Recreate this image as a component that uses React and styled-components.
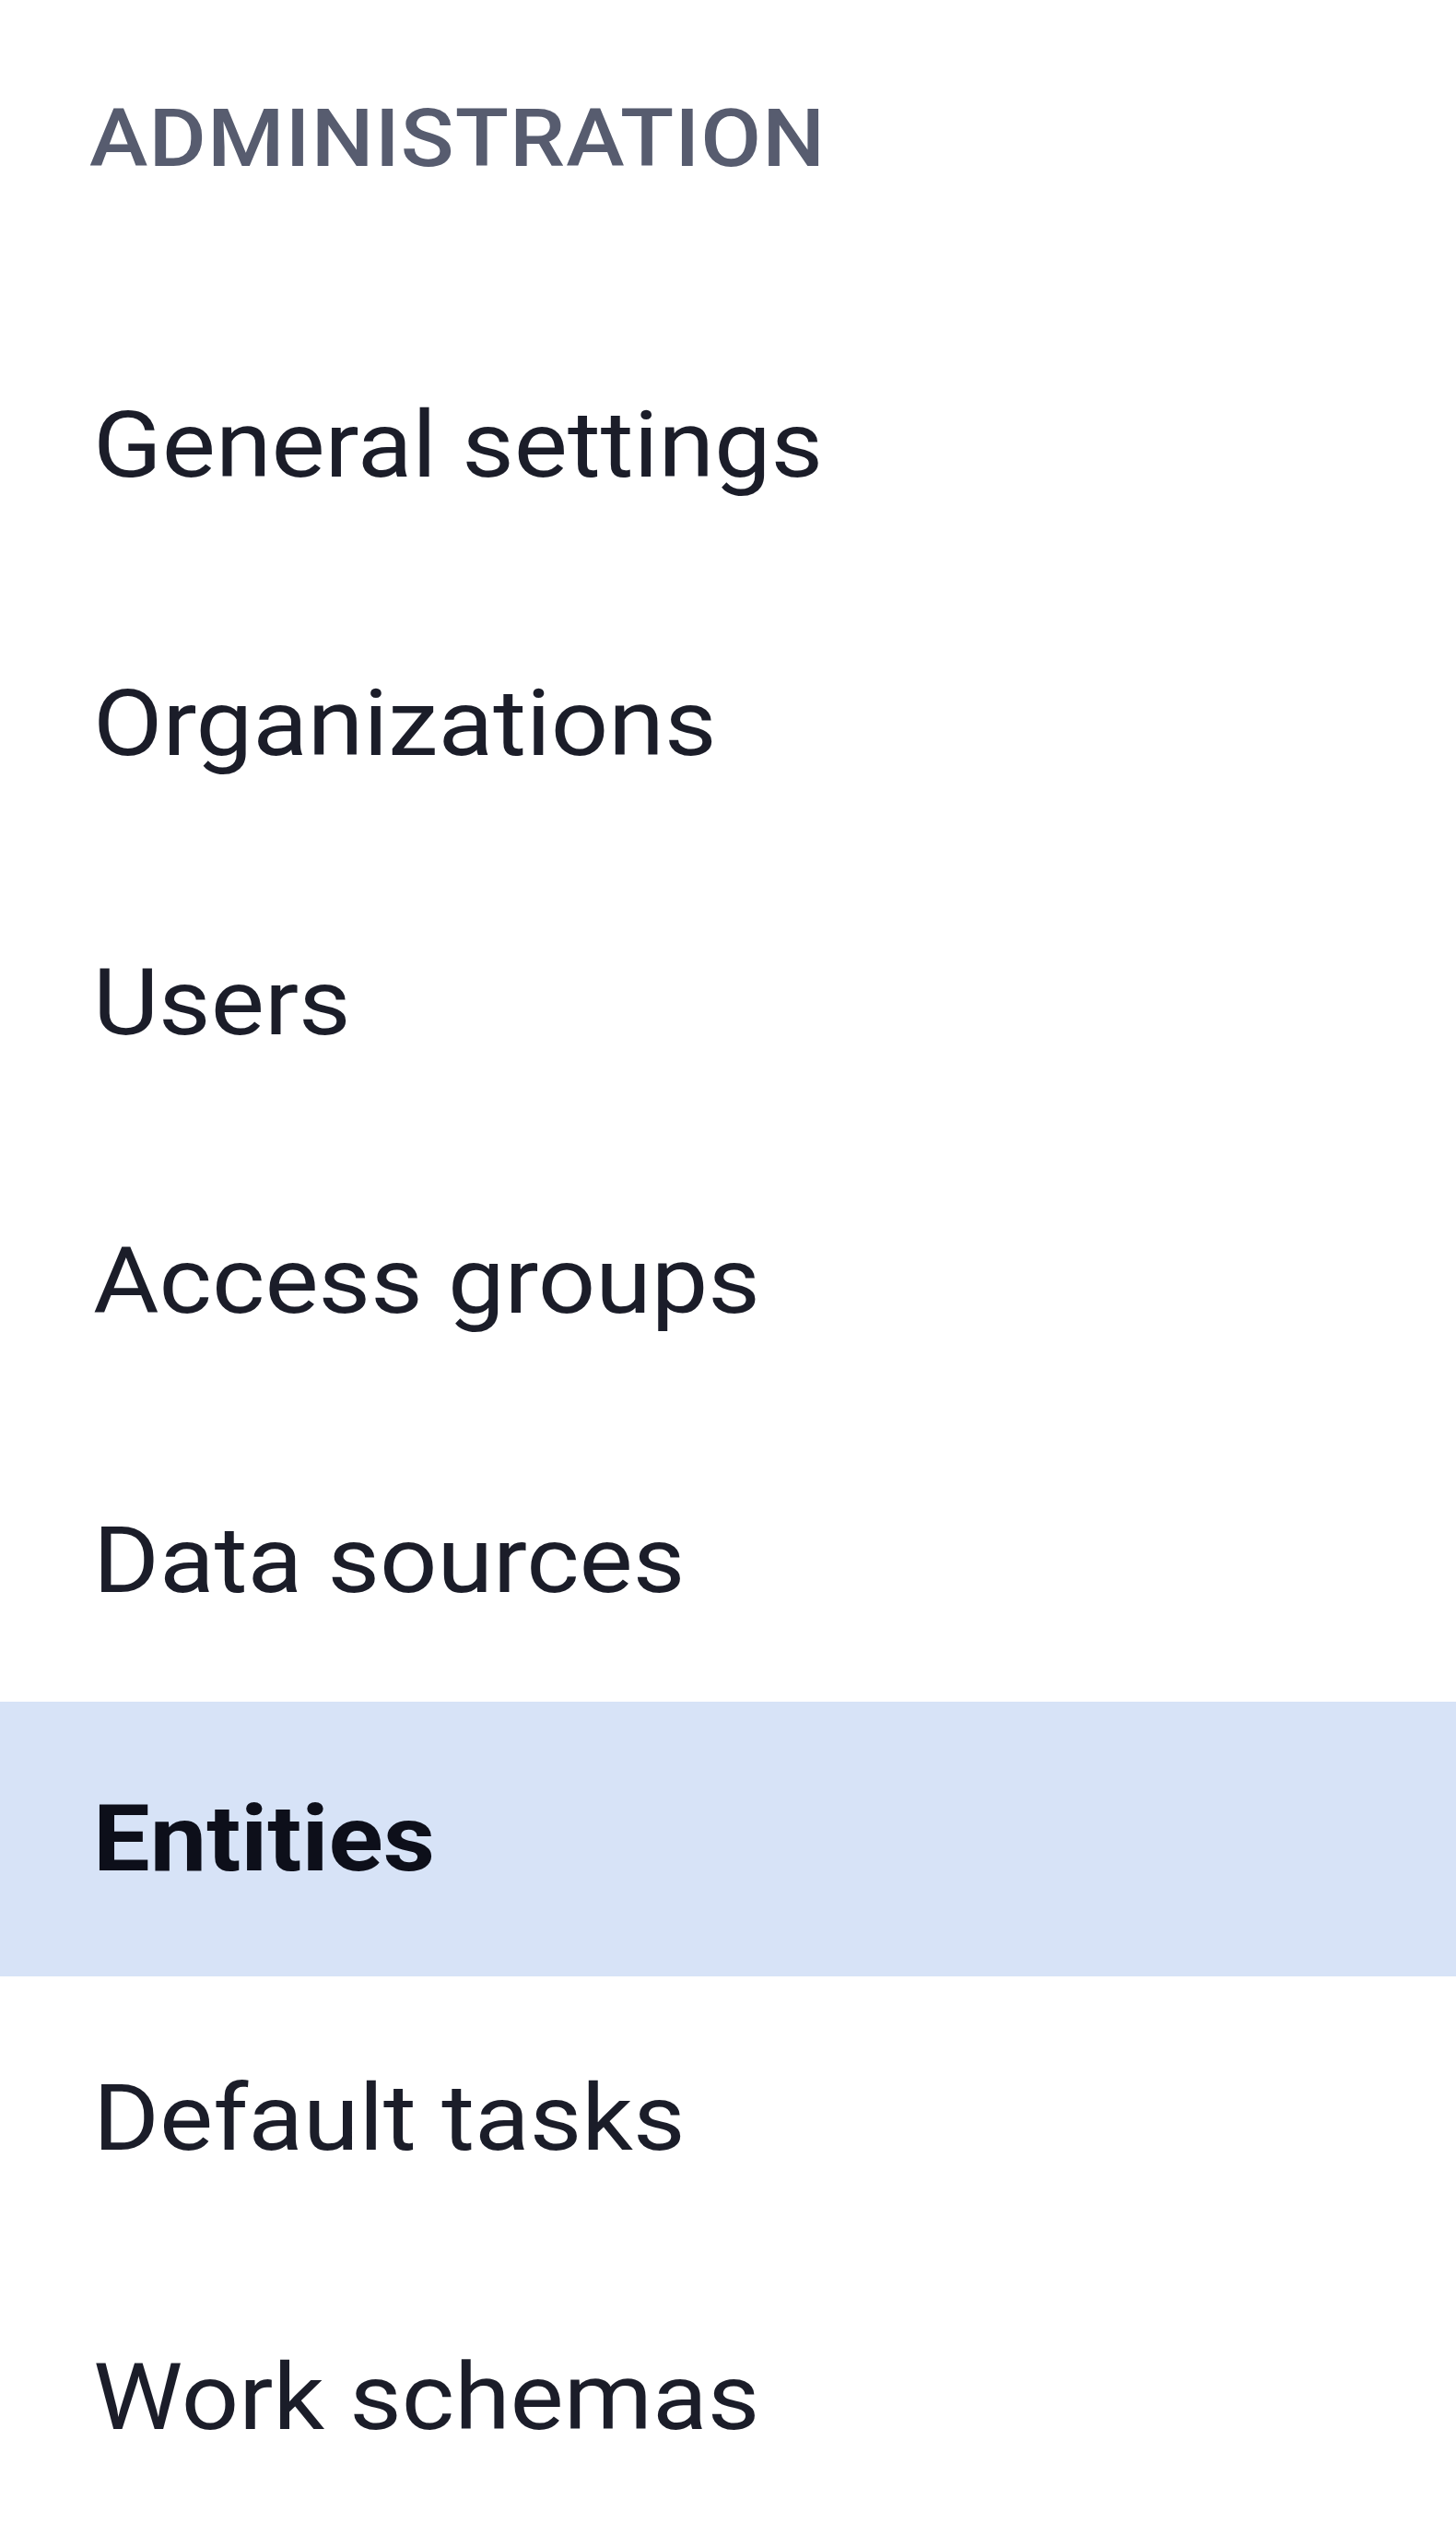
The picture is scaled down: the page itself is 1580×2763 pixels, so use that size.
import React from "react";
import styled, { createGlobalStyle } from "styled-components";

const Global = createGlobalStyle`
  html, body { margin: 0; padding: 0; background: #ffffff; }
  body { font-family: Roboto, "Noto Sans", "Liberation Sans", sans-serif; }
`;

const Sidebar = styled.nav`
  width: 1580px;
  padding-top: 98px;
  display: flex;
  flex-direction: column;
  background: #ffffff;
`;

const Heading = styled.h2`
  margin: 0 0 132px 0;
  padding-left: 97px;
  font-family: Roboto, sans-serif;
  font-size: 88px;
  font-weight: 500;
  letter-spacing: 1px;
  text-transform: uppercase;
  color: #575c6f;
  line-height: normal;
`;

const Stretch = styled.span`
  display: inline-block;
  transform: scaleX(1.086);
  transform-origin: left center;
  white-space: nowrap;
`;

const List = styled.ul`
  list-style: none;
  margin: 0;
  padding: 0;
  display: flex;
  flex-direction: column;
  gap: 4.6px;
`;

const Item = styled.li`
  height: 298px;
  display: flex;
  align-items: center;
  padding-left: 101px;
  font-family: Roboto, sans-serif;
  font-size: 101px;
  font-weight: ${(p) => (p.$active ? 700 : 400)};
  color: ${(p) => (p.$active ? "#0d0f1a" : "#1b1d29")};
  background: ${(p) => (p.$active ? "#d7e3f7" : "transparent")};
`;

const items = [
  "General settings",
  "Organizations",
  "Users",
  "Access groups",
  "Data sources",
  "Entities",
  "Default tasks",
  "Work schemas",
];

export default function App() {
  return (
    <>
      <Global />
      <Sidebar>
        <Heading>
          <Stretch>Administration</Stretch>
        </Heading>
        <List>
          {items.map((label) => (
            <Item key={label} $active={label === "Entities"}>
              <Stretch>{label}</Stretch>
            </Item>
          ))}
        </List>
      </Sidebar>
    </>
  );
}
